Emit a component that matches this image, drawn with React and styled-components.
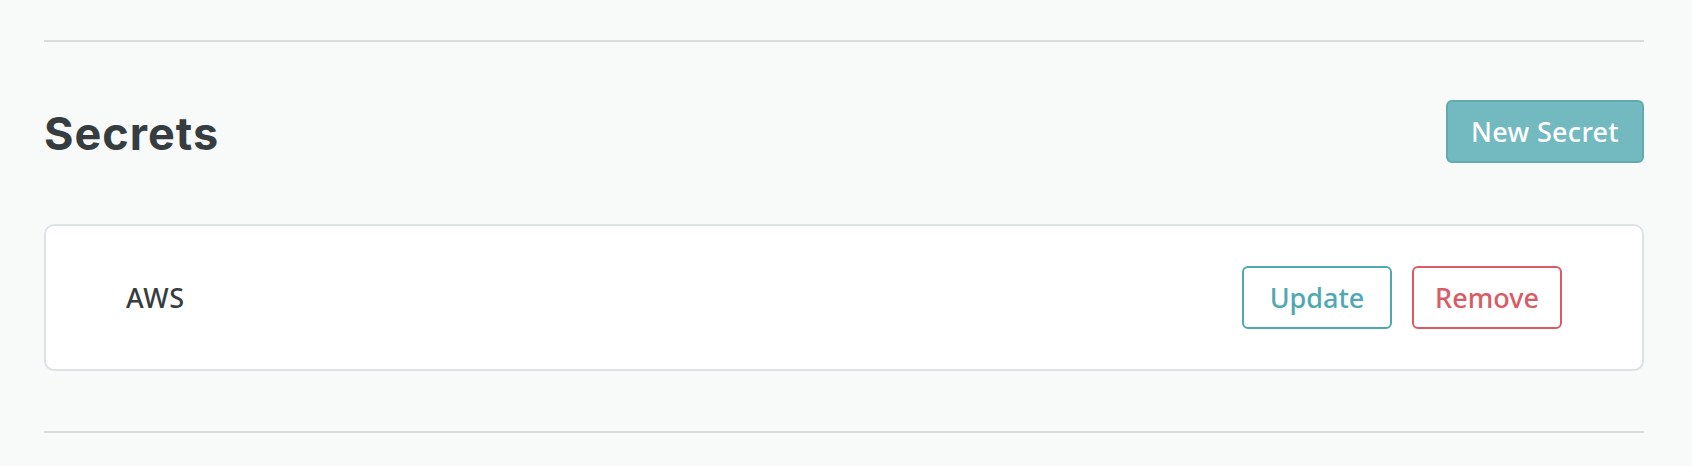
import React from "react";
import styled, { createGlobalStyle } from "styled-components";

const Global = createGlobalStyle`
  html, body { margin: 0; padding: 0; background: #f8f9f9; }
  body { font-family: "Noto Sans", "Open Sans", sans-serif; color: #363d40; }
`;

const Page = styled.div`
  padding: 40px 48px 0 44px;
  width: 1600px;
`;

const Rule = styled.hr`
  margin: 0;
  border: none;
  height: 2px;
  background: #d9dcdc;
`;

const Header = styled.div`
  display: flex;
  align-items: center;
  justify-content: space-between;
  height: 63px;
  margin: 58px 0 61px;
`;

const Title = styled.h1`
  margin: 0;
  padding-top: 4px;
  font-family: Inter, "Noto Sans", sans-serif;
  font-size: 45px;
  font-weight: 700;
  letter-spacing: 1px;
  color: #363d40;
`;

const PrimaryButton = styled.button`
  height: 63px;
  width: 198px;
  border: 2px solid #62a9b0;
  border-radius: 6px;
  background: #72b9c0;
  color: #fff;
  font-family: inherit;
  font-size: 27px;
  font-weight: 500;
  letter-spacing: 0.3px;
  cursor: pointer;
`;

const Card = styled.div`
  display: flex;
  align-items: center;
  justify-content: space-between;
  height: 147px;
  box-sizing: border-box;
  padding: 0 80px 0 80px;
  background: #fff;
  border: 2px solid #dde2e4;
  border-radius: 10px;
  margin-bottom: 60px;
`;

const Name = styled.div`
  font-size: 27px;
  font-weight: 500;
  letter-spacing: 0.6px;
  color: #363d40;
`;

const Actions = styled.div`
  display: flex;
  gap: 20px;
`;

const OutlineButton = styled.button`
  height: 63px;
  width: 150px;
  border: 2px solid ${(p) => p.$color};
  border-radius: 6px;
  background: #fff;
  color: ${(p) => p.$color};
  font-family: inherit;
  font-size: 27px;
  font-weight: 500;
  cursor: pointer;
`;

export default function App() {
  return (
    <>
      <Global />
      <Page>
        <Rule />
        <Header>
          <Title>Secrets</Title>
          <PrimaryButton>New Secret</PrimaryButton>
        </Header>
        <Card>
          <Name>AWS</Name>
          <Actions>
            <OutlineButton $color="#4fa8b2">Update</OutlineButton>
            <OutlineButton $color="#d95c64">Remove</OutlineButton>
          </Actions>
        </Card>
        <Rule />
      </Page>
    </>
  );
}
